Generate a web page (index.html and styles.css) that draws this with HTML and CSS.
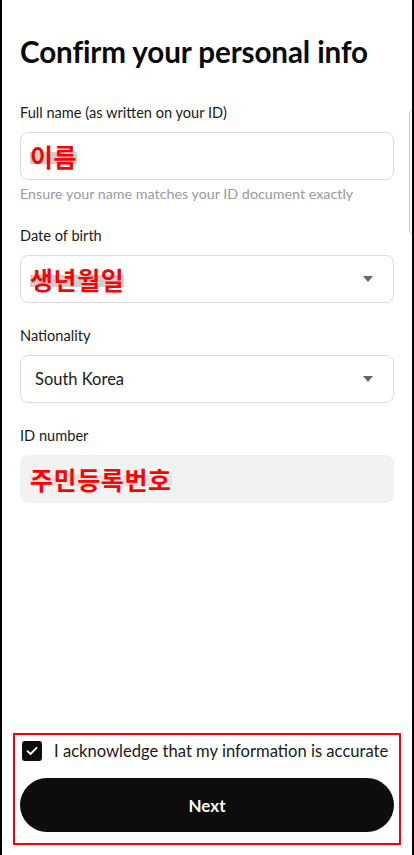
FILE: index.html
```html
<!DOCTYPE html>
<html lang="en">
<head>
  <meta charset="UTF-8">
  <meta name="viewport" content="width=device-width, initial-scale=1.0">
  <title>Confirm your personal info</title>
  <link rel="stylesheet" href="styles.css">
</head>
<body>
  <div class="screen">
    <div class="side-tab"></div>
    <div class="content">
      <h1 class="title">Confirm your personal info</h1>

      <div class="field">
        <label class="label">Full name (as written on your ID)</label>
        <div class="input">
          <span class="mask">이름</span>
        </div>
        <p class="hint">Ensure your name matches your ID document exactly</p>
      </div>

      <div class="field">
        <label class="label">Date of birth</label>
        <div class="input select">
          <span class="mask">생년월일</span>
          <span class="arrow"></span>
        </div>
      </div>

      <div class="field">
        <label class="label">Nationality</label>
        <div class="input select">
          <span class="value">South Korea</span>
          <span class="arrow"></span>
        </div>
      </div>

      <div class="field">
        <label class="label">ID number</label>
        <div class="input disabled">
          <span class="mask mask--light">주민등록번호</span>
        </div>
      </div>
    </div>

    <div class="footer">
      <label class="agree">
        <span class="checkbox">
          <svg width="12" height="10" viewBox="0 0 12 10"><path d="M1.5 5.2 L4.5 8 L10.5 1.8" fill="none" stroke="#fff" stroke-width="1.8" stroke-linecap="round" stroke-linejoin="round"/></svg>
        </span>
        <span class="agree-text">I acknowledge that my information is accurate</span>
      </label>
      <button class="next-btn">Next</button>
    </div>
  </div>
</body>
</html>
```

FILE: styles.css
```css
* {
  box-sizing: border-box;
}
body {
  margin: 0;
  background: #fff;
  font-family: "Lato", "Noto Sans CJK KR", sans-serif;
  color: #111;
}
.screen {
  position: relative;
  width: 414px;
  height: 855px;
  border-left: 2px solid #000;
  border-right: 2px solid #000;
  display: flex;
  flex-direction: column;
  overflow: hidden;
}
.side-tab {
  position: absolute;
  left: 407px;
  top: 108px;
  width: 20px;
  height: 128px;
  border: 1.5px solid #ccc;
  border-radius: 6px;
}
.content {
  padding: 34px 18px 0 18px;
}
.title {
  margin: 0 0 34px 0;
  font-size: 29.6px;
  font-weight: 700;
  letter-spacing: -0.1px;
  line-height: 36px;
  color: #0a0a0a;
}
.field {
  margin-bottom: 24px;
}
.label {
  display: block;
  font-size: 14.6px;
  line-height: 18px;
  color: #1a1a1a;
  margin-bottom: 10px;
}
.input {
  height: 48px;
  border: 1.5px solid #dcdcdc;
  border-radius: 8px;
  display: flex;
  align-items: center;
  padding: 0 12px 0 9px;
}
.select {
  justify-content: space-between;
}
.disabled {
  background: #f2f2f2;
  border-color: #f2f2f2;
}
.mask {
  font-family: "Noto Sans CJK KR", sans-serif;
  font-weight: 700;
  font-size: 25px;
  line-height: 28px;
  color: #ff0000;
  letter-spacing: 0.6px;
  background: linear-gradient(to bottom, transparent 35%, #cfcfcf 35%, #cfcfcf 80%, transparent 80%);
}
.mask--light {
  background: linear-gradient(to bottom, transparent 35%, #e4e4e4 35%, #e4e4e4 75%, transparent 75%);
}
.value {
  font-size: 16.5px;
  color: #1a1a1a;
  padding-left: 5px;
}
.arrow {
  width: 0;
  height: 0;
  border-left: 5px solid transparent;
  border-right: 5px solid transparent;
  border-top: 6px solid #666;
  margin-right: 8px;
}
.hint {
  margin: 5px 0 0 0;
  font-size: 14.3px;
  line-height: 18px;
  color: #9a9a9a;
}
.footer {
  margin: auto 11px 10px 11px;
  border: 2px solid #ff0000;
  padding: 4px 5px 11px 5px;
}
.agree {
  display: flex;
  align-items: center;
  gap: 12px;
  padding-left: 2px;
  height: 24px;
}
.checkbox {
  width: 20px;
  height: 20px;
  background: #0d0d0d;
  border-radius: 3px;
  display: flex;
  align-items: center;
  justify-content: center;
}
.agree-text {
  font-size: 16.6px;
  color: #1a1a1a;
}
.next-btn {
  display: block;
  width: 100%;
  height: 54px;
  margin-top: 15px;
  border: none;
  border-radius: 27px;
  background: #0d0d0d;
  color: #fff;
  font-family: "Lato", sans-serif;
  font-weight: 700;
  font-size: 17px;
}
```
